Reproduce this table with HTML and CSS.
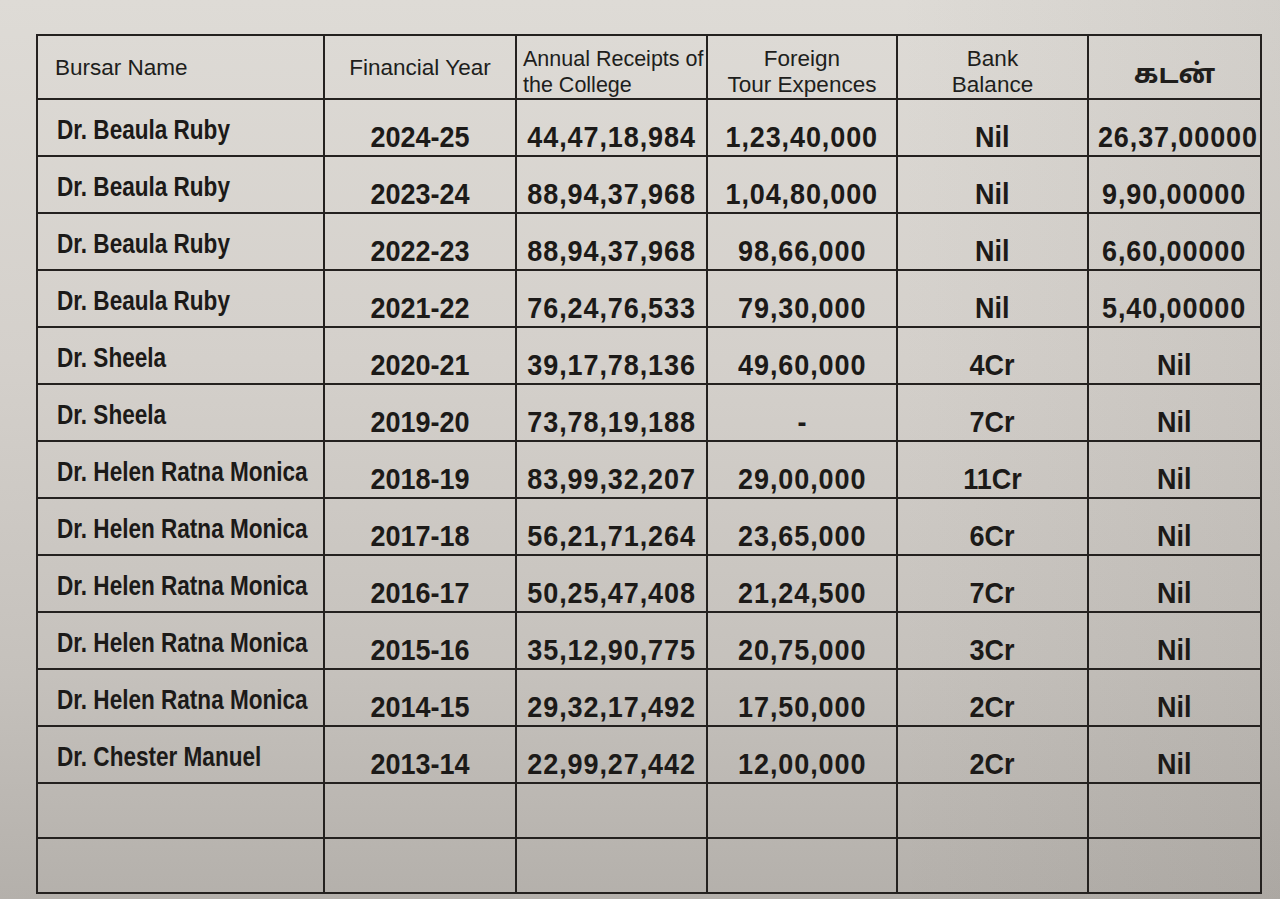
FILE: index.html
```html
<!DOCTYPE html>
<html lang="en">
<head>
<meta charset="utf-8">
<title>Bursar Financial Statement</title>
<link rel="stylesheet" href="styles.css">
</head>
<body>
<div class="sheet">
  <table class="ledger">
    <colgroup>
      <col class="c-name"><col class="c-year"><col class="c-rec"><col class="c-tour"><col class="c-bank"><col class="c-loan">
    </colgroup>
    <thead>
      <tr class="head">
        <th class="h-left">Bursar Name</th>
        <th>Financial Year</th>
        <th class="h-left h-tight h-two">Annual Receipts of<br>the College</th>
        <th class="h-two">Foreign<br>Tour Expences</th>
        <th class="h-two">Bank<br>Balance</th>
        <th class="h-tamil" lang="ta">கடன்</th>
      </tr>
    </thead>
    <tbody>
      <tr><td class="name"><span class="t">Dr. Beaula Ruby</span></td><td><span class="t">2024-25</span></td><td class="num"><span class="t">44,47,18,984</span></td><td class="num"><span class="t">1,23,40,000</span></td><td><span class="t">Nil</span></td><td class="num"><span class="t">26,37,00000</span></td></tr>
      <tr><td class="name"><span class="t">Dr. Beaula Ruby</span></td><td><span class="t">2023-24</span></td><td class="num"><span class="t">88,94,37,968</span></td><td class="num"><span class="t">1,04,80,000</span></td><td><span class="t">Nil</span></td><td class="num"><span class="t">9,90,00000</span></td></tr>
      <tr><td class="name"><span class="t">Dr. Beaula Ruby</span></td><td><span class="t">2022-23</span></td><td class="num"><span class="t">88,94,37,968</span></td><td class="num"><span class="t">98,66,000</span></td><td><span class="t">Nil</span></td><td class="num"><span class="t">6,60,00000</span></td></tr>
      <tr><td class="name"><span class="t">Dr. Beaula Ruby</span></td><td><span class="t">2021-22</span></td><td class="num"><span class="t">76,24,76,533</span></td><td class="num"><span class="t">79,30,000</span></td><td><span class="t">Nil</span></td><td class="num"><span class="t">5,40,00000</span></td></tr>
      <tr><td class="name"><span class="t">Dr. Sheela</span></td><td><span class="t">2020-21</span></td><td class="num"><span class="t">39,17,78,136</span></td><td class="num"><span class="t">49,60,000</span></td><td><span class="t">4Cr</span></td><td><span class="t">Nil</span></td></tr>
      <tr><td class="name"><span class="t">Dr. Sheela</span></td><td><span class="t">2019-20</span></td><td class="num"><span class="t">73,78,19,188</span></td><td><span class="t">-</span></td><td><span class="t">7Cr</span></td><td><span class="t">Nil</span></td></tr>
      <tr><td class="name"><span class="t">Dr. Helen Ratna Monica</span></td><td><span class="t">2018-19</span></td><td class="num"><span class="t">83,99,32,207</span></td><td class="num"><span class="t">29,00,000</span></td><td><span class="t">11Cr</span></td><td><span class="t">Nil</span></td></tr>
      <tr><td class="name"><span class="t">Dr. Helen Ratna Monica</span></td><td><span class="t">2017-18</span></td><td class="num"><span class="t">56,21,71,264</span></td><td class="num"><span class="t">23,65,000</span></td><td><span class="t">6Cr</span></td><td><span class="t">Nil</span></td></tr>
      <tr><td class="name"><span class="t">Dr. Helen Ratna Monica</span></td><td><span class="t">2016-17</span></td><td class="num"><span class="t">50,25,47,408</span></td><td class="num"><span class="t">21,24,500</span></td><td><span class="t">7Cr</span></td><td><span class="t">Nil</span></td></tr>
      <tr><td class="name"><span class="t">Dr. Helen Ratna Monica</span></td><td><span class="t">2015-16</span></td><td class="num"><span class="t">35,12,90,775</span></td><td class="num"><span class="t">20,75,000</span></td><td><span class="t">3Cr</span></td><td><span class="t">Nil</span></td></tr>
      <tr><td class="name"><span class="t">Dr. Helen Ratna Monica</span></td><td><span class="t">2014-15</span></td><td class="num"><span class="t">29,32,17,492</span></td><td class="num"><span class="t">17,50,000</span></td><td><span class="t">2Cr</span></td><td><span class="t">Nil</span></td></tr>
      <tr><td class="name"><span class="t">Dr. Chester Manuel</span></td><td><span class="t">2013-14</span></td><td class="num"><span class="t">22,99,27,442</span></td><td class="num"><span class="t">12,00,000</span></td><td><span class="t">2Cr</span></td><td><span class="t">Nil</span></td></tr>
      <tr class="blank"><td></td><td></td><td></td><td></td><td></td><td></td></tr>
      <tr class="blank"><td></td><td></td><td></td><td></td><td></td><td></td></tr>
    </tbody>
  </table>
</div>
</body>
</html>
```

FILE: styles.css
```css
html, body {
  margin: 0;
  padding: 0;
}

body {
  width: 1280px;
  height: 899px;
  overflow: hidden;
  background:
    linear-gradient(90deg, rgba(0,0,0,0) 0%, rgba(0,0,0,0) 70%, rgba(60,55,50,0.07) 100%),
    linear-gradient(180deg, #dedbd6 0%, #d4d0cb 40%, #c5c1bc 75%, #b4b0ab 100%);
  color: #1d1b19;
  font-family: "Liberation Sans", Arial, sans-serif;
}

.sheet {
  padding: 34px 0 0 36px;
}

.ledger {
  border-collapse: collapse;
  table-layout: fixed;
  width: 1224px;
}

.c-name { width: 287px; }
.c-year { width: 192px; }
.c-rec  { width: 191px; }
.c-tour { width: 190px; }
.c-bank { width: 191px; }
.c-loan { width: 173px; }

.ledger tr {
  height: 57px;
}

.ledger tr.head {
  height: 64px;
}

.ledger tr.blank {
  height: 55px;
}

.ledger th,
.ledger td {
  border: 2px solid #24211f;
  padding: 0;
  text-align: center;
  white-space: nowrap;
  overflow: visible;
}

.ledger th {
  vertical-align: middle;
  font-family: "Liberation Sans", Arial, sans-serif;
  font-weight: 400;
  font-size: 22.5px;
  line-height: 26px;
  color: #201e1c;
  padding-top: 2px;
}

.ledger th.h-two {
  padding-top: 10px;
}

.ledger th.h-left {
  text-align: left;
  padding-left: 17px;
}

.ledger th.h-tight {
  padding-left: 6px;
  font-size: 21.5px;
}

.ledger th.h-tamil {
  font-family: "Noto Sans Tamil", "Lohit Tamil", "Latha", "Noto Sans", sans-serif;
  font-weight: 700;
  font-size: 27px;
  padding-top: 20px;
}

.ledger td {
  vertical-align: top;
  padding-top: 22px;
  font-family: "Liberation Sans", Arial, sans-serif;
  font-weight: 700;
  font-size: 30px;
  line-height: 30px;
  color: #1c1a18;
}

.ledger td .t {
  display: inline-block;
  transform: scaleX(0.9);
  transform-origin: center;
}

.ledger td.num .t {
  letter-spacing: 1px;
}

.ledger td.name {
  text-align: left;
  padding-left: 19px;
  padding-top: 16px;
  font-size: 27.5px;
  line-height: 28px;
}

.ledger td.name .t {
  transform: scaleX(0.82);
  transform-origin: left center;
}
```
